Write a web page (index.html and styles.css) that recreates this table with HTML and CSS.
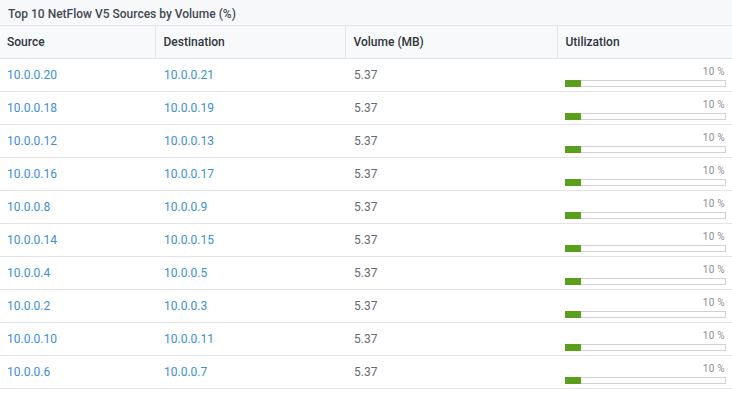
FILE: index.html
```html
<!DOCTYPE html>
<html>
<head>
<meta charset="utf-8">
<link rel="stylesheet" href="styles.css">
</head>
<body>
<div class="panel">
  <div class="title">Top 10 NetFlow V5 Sources by Volume (%)</div>
  <table class="grid">
    <colgroup><col class="c1"><col class="c2"><col class="c3"><col class="c4"></colgroup>
    <thead>
      <tr><th>Source</th><th>Destination</th><th>Volume (MB)</th><th>Utilization</th></tr>
    </thead>
    <tbody>
      <tr><td><a>10.0.0.20</a></td><td><a>10.0.0.21</a></td><td class="num">5.37</td><td class="util"><div class="pct">10 %</div><div class="bar"><div class="fill"></div></div></td></tr>
      <tr><td><a>10.0.0.18</a></td><td><a>10.0.0.19</a></td><td class="num">5.37</td><td class="util"><div class="pct">10 %</div><div class="bar"><div class="fill"></div></div></td></tr>
      <tr><td><a>10.0.0.12</a></td><td><a>10.0.0.13</a></td><td class="num">5.37</td><td class="util"><div class="pct">10 %</div><div class="bar"><div class="fill"></div></div></td></tr>
      <tr><td><a>10.0.0.16</a></td><td><a>10.0.0.17</a></td><td class="num">5.37</td><td class="util"><div class="pct">10 %</div><div class="bar"><div class="fill"></div></div></td></tr>
      <tr><td><a>10.0.0.8</a></td><td><a>10.0.0.9</a></td><td class="num">5.37</td><td class="util"><div class="pct">10 %</div><div class="bar"><div class="fill"></div></div></td></tr>
      <tr><td><a>10.0.0.14</a></td><td><a>10.0.0.15</a></td><td class="num">5.37</td><td class="util"><div class="pct">10 %</div><div class="bar"><div class="fill"></div></div></td></tr>
      <tr><td><a>10.0.0.4</a></td><td><a>10.0.0.5</a></td><td class="num">5.37</td><td class="util"><div class="pct">10 %</div><div class="bar"><div class="fill"></div></div></td></tr>
      <tr><td><a>10.0.0.2</a></td><td><a>10.0.0.3</a></td><td class="num">5.37</td><td class="util"><div class="pct">10 %</div><div class="bar"><div class="fill"></div></div></td></tr>
      <tr><td><a>10.0.0.10</a></td><td><a>10.0.0.11</a></td><td class="num">5.37</td><td class="util"><div class="pct">10 %</div><div class="bar"><div class="fill"></div></div></td></tr>
      <tr><td><a>10.0.0.6</a></td><td><a>10.0.0.7</a></td><td class="num">5.37</td><td class="util"><div class="pct">10 %</div><div class="bar"><div class="fill"></div></div></td></tr>
    </tbody>
  </table>
</div>
</body>
</html>
```
FILE: styles.css
```css
html, body {
  margin: 0;
  padding: 0;
  background: #ffffff;
}
body {
  font-family: Roboto, "Liberation Sans", sans-serif;
  width: 732px;
}
.panel {
  width: 732px;
}
.title {
  height: 26px;
  box-sizing: border-box;
  padding: 7px 0 0 8px;
  font-size: 12px;
  font-weight: 500;
  color: #444a52;
  background: #f7f8fa;
  border-bottom: 1px solid #e2e4e8;
}
.grid {
  width: 732px;
  border-collapse: collapse;
  table-layout: fixed;
}
.c1 { width: 155px; }
.c2 { width: 190px; }
.c3 { width: 212px; }
.c4 { width: 175px; }
th {
  height: 32px;
  padding: 0 0 0 8px;
  text-align: left;
  font-size: 12px;
  font-weight: 500;
  color: #2f3640;
  background: #f8f9fb;
  border-left: 1px solid #e2e4e8;
  border-bottom: 1px solid #e0e2e6;
  box-sizing: border-box;
}
th:first-child {
  border-left: none;
  padding-left: 7px;
}
td {
  height: 33px;
  box-sizing: border-box;
  padding: 0 0 0 9px;
  font-size: 12px;
  color: #666a70;
  border-bottom: 1px solid #e3e4e6;
  vertical-align: middle;
}
td:first-child {
  padding-left: 7px;
}
td a {
  color: #3b8fd2;
  text-decoration: none;
}
td.num {
  padding-left: 9px;
}
td.util {
  padding: 0 6px 0 8px;
  vertical-align: top;
}
.pct {
  text-align: right;
  font-size: 10px;
  color: #8a8d92;
  line-height: 12px;
  margin-top: 7px;
  padding-right: 1px;
  letter-spacing: 0.3px;
}
.bar {
  margin-top: 2px;
  height: 7px;
  box-sizing: border-box;
  border: 1px solid #cfd1d4;
  background: #ffffff;
  position: relative;
}
.fill {
  width: 10%;
  height: 7px;
  margin: -1px 0 0 -1px;
  background: #5a9f1c;
}
```
